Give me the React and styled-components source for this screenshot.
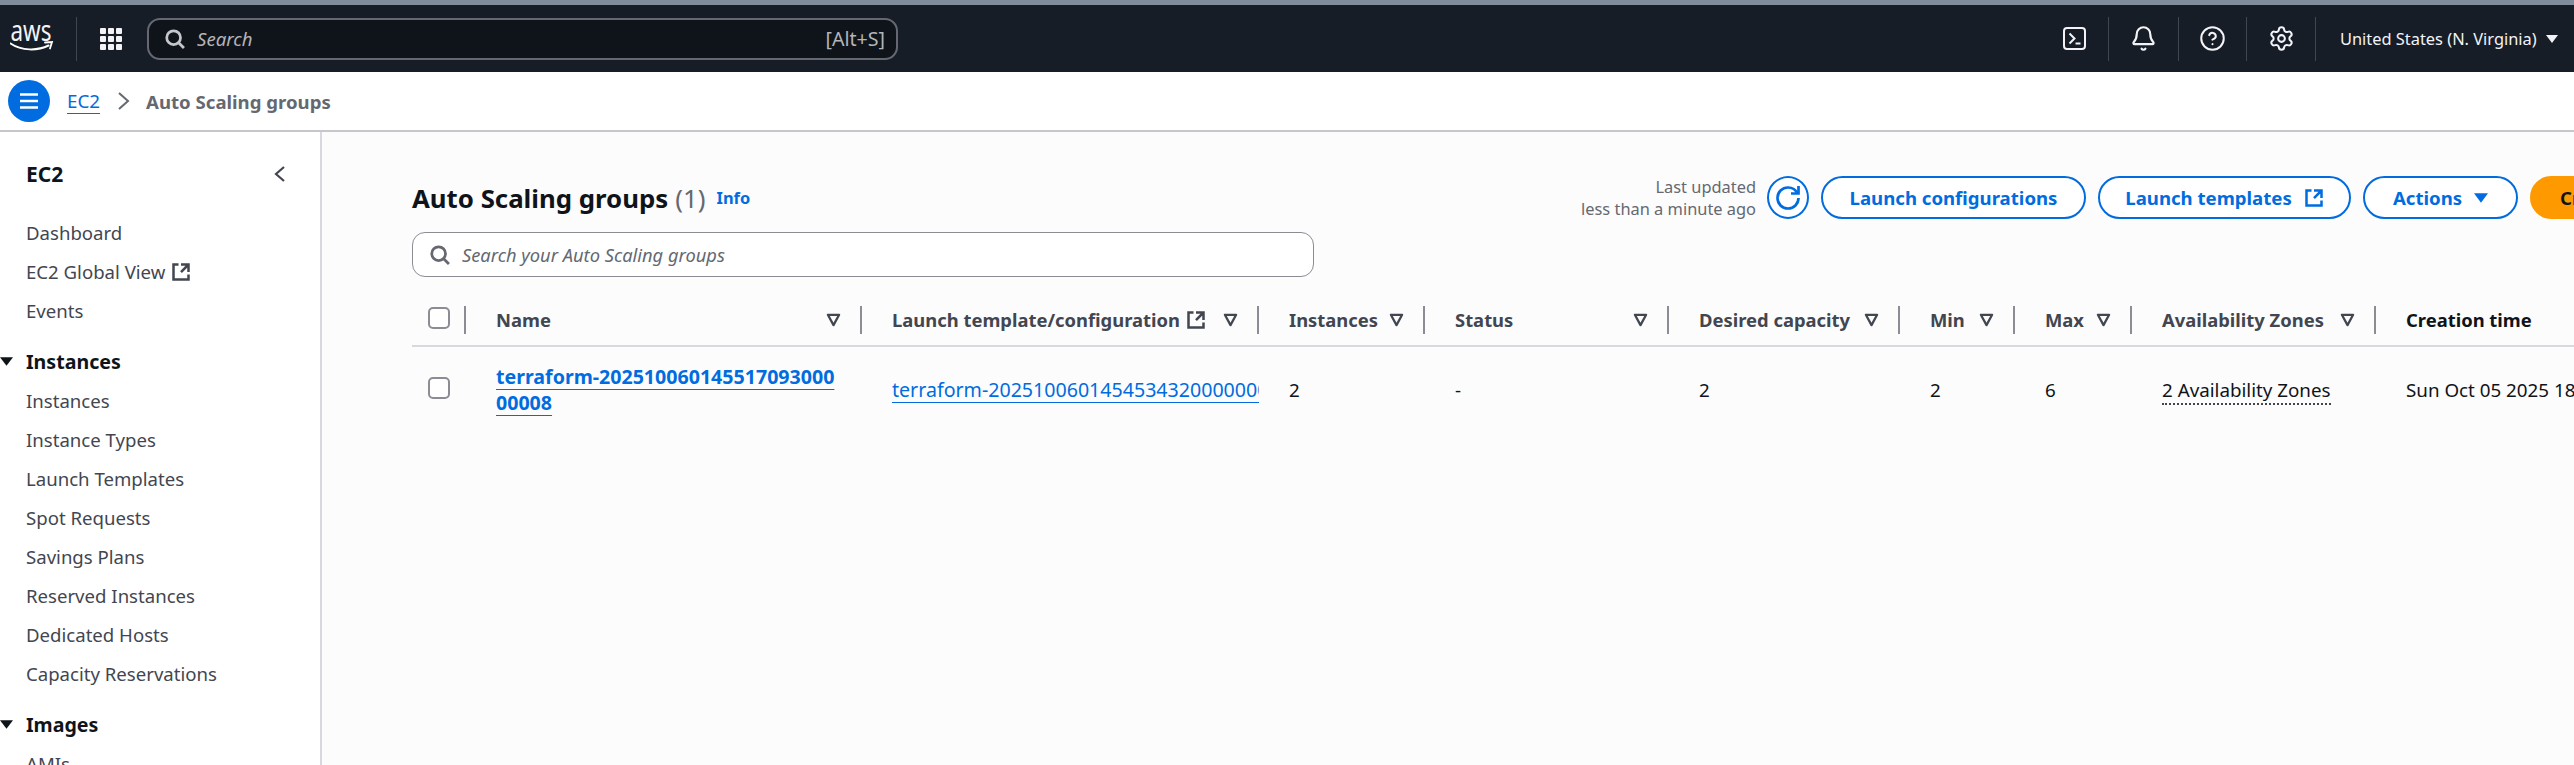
import React from 'react';
import styled, { createGlobalStyle } from 'styled-components';
import { Bell, CircleHelp, Settings } from 'lucide-react';

const GlobalStyle = createGlobalStyle`
    html,
    body {
        width: 100%;
        height: 100%;
        margin: 0;
        overflow: hidden;
    }

    body {
        background: #fff;
        color: #0f141a;
        font-family: 'Noto Sans', 'Open Sans', sans-serif;
        font-size: 18.6px;
    }
`;

const Page = styled.div`
    display: flex;
    flex-direction: column;
    height: 765px;
    overflow: hidden;
`;

const Stripe = styled.div`
    flex: none;
    height: 5px;
    background: #808c9c;
`;

const TopNav = styled.header`
    display: flex;
    flex: none;
    align-items: center;
    height: 67px;
    padding-left: 10px;
    background: #161d26;
    color: #f3f3f7;
`;

const LogoBox = styled.div`
    display: flex;
    align-items: center;
    width: 67px;
    height: 44px;
    box-sizing: border-box;
    border-right: 1px solid #424650;
`;

const GridButton = styled.div`
    display: flex;
    justify-content: center;
    box-sizing: border-box;
    width: 70px;
    padding-right: 2px;
`;

const GlobalSearch = styled.div`
    display: flex;
    align-items: center;
    box-sizing: border-box;
    width: 751px;
    height: 42px;
    padding: 0 11px 0 15px;
    color: #b4b4bb;
    background: #0f141a;
    border: 2px solid #656871;
    border-radius: 13px;
`;

const GlobalSearchText = styled.span`
    flex: 1;
    margin-left: 11px;
    font-size: 18.6px;
    font-style: italic;
`;

const Shortcut = styled.span`
    font-size: 19.6px;
`;

const NavRight = styled.div`
    display: flex;
    align-items: center;
    margin-left: auto;
`;

const NavIcon = styled.div`
    display: flex;
    align-items: center;
    justify-content: center;
    box-sizing: border-box;
    width: ${({ $w }) => $w}px;
    height: 44px;
    border-right: 1px solid #424650;
`;

const Region = styled.div`
    display: flex;
    align-items: center;
    gap: 9px;
    box-sizing: border-box;
    width: 258px;
    padding-left: 24px;
    font-size: 16.4px;
    white-space: nowrap;
`;

const Breadcrumbs = styled.div`
    display: flex;
    flex: none;
    align-items: center;
    box-sizing: border-box;
    height: 60px;
    padding-left: 8px;
    background: #fff;
    border-bottom: 2px solid #c6c6cd;
`;

const MenuButton = styled.div`
    display: flex;
    align-items: center;
    justify-content: center;
    width: 42px;
    height: 42px;
    background: #006ce0;
    border-radius: 50%;
`;

const CrumbLink = styled.a`
    margin-left: 17px;
    color: #006ce0;
    font-size: 18.8px;
    text-decoration: underline;
    text-underline-offset: 5px;
`;

const CrumbSeparator = styled.span`
    display: flex;
    margin: 0 16px 0 17px;
    color: #656871;
`;

const CrumbCurrent = styled.span`
    color: #656871;
    font-size: 18.6px;
    font-weight: 700;
`;

const Body = styled.div`
    display: flex;
    flex: 1;
    min-height: 0;
`;

const Sidebar = styled.nav`
    flex: none;
    box-sizing: border-box;
    width: 322px;
    padding-top: 24px;
    overflow: hidden;
    background: #fff;
    border-right: 2px solid #d8d8de;
`;

const SidebarTitle = styled.div`
    display: flex;
    align-items: center;
    justify-content: space-between;
    height: 36px;
    margin-bottom: 21px;
    padding: 0 34px 0 26px;
    font-size: 21px;
    font-weight: 700;
    color: #0f141a;
`;

const NavItem = styled.a`
    display: flex;
    align-items: center;
    gap: 6px;
    height: 39px;
    padding-left: 26px;
    color: #424650;
    font-size: 18.6px;
    white-space: nowrap;
`;

const NavSection = styled.div`
    display: flex;
    align-items: center;
    height: 39px;
    margin-top: 12px;
    color: #0f141a;
    font-size: 19.6px;
    font-weight: 700;
`;

const NavSectionCaret = styled.span`
    display: flex;
    width: 26px;
`;

const Main = styled.main`
    flex: 1;
    min-width: 0;
    padding: 44px 0 0 90px;
    overflow: hidden;
    background: #fcfcfc;
`;

const Content = styled.div`
    width: 2388px;
`;

const Toolbar = styled.div`
    display: flex;
    align-items: center;
    height: 43px;
`;

const Title = styled.h1`
    margin: 0;
    color: #0f141a;
    font-size: 25.8px;
    font-weight: 700;
`;

const Count = styled.span`
    margin-left: 7px;
    color: #656871;
    font-weight: 400;
`;

const InfoLink = styled.a`
    margin-left: 11px;
    color: #006ce0;
    font-size: 16.4px;
    font-weight: 700;
`;

const Actions = styled.div`
    display: flex;
    align-items: center;
    gap: 12px;
    margin-left: auto;
`;

const LastUpdated = styled.div`
    margin-right: -1px;
    color: #656871;
    font-size: 16.4px;
    line-height: 22px;
    text-align: right;
`;

const RoundButton = styled.div`
    display: flex;
    align-items: center;
    justify-content: center;
    box-sizing: border-box;
    width: 42px;
    height: 43px;
    background: #fff;
    border: 2px solid #006ce0;
    border-radius: 50%;
`;

const Button = styled.div`
    display: flex;
    align-items: center;
    justify-content: center;
    gap: 12px;
    box-sizing: border-box;
    width: ${({ $w }) => $w}px;
    height: 43px;
    color: #006ce0;
    font-size: 18.6px;
    font-weight: 700;
    white-space: nowrap;
    background: #fff;
    border: 2px solid #006ce0;
    border-radius: 22px;
`;

const PrimaryButton = styled(Button)`
    justify-content: flex-start;
    padding-left: 28px;
    color: #0f141a;
    background: #ff9900;
    border-color: #ff9900;
`;

const TableSearch = styled.div`
    display: flex;
    align-items: center;
    box-sizing: border-box;
    width: 902px;
    height: 45px;
    margin-top: 13px;
    padding-left: 16px;
    color: #656871;
    background: #fff;
    border: 1px solid #8c8c94;
    border-radius: 13px;
`;

const TableSearchText = styled.span`
    margin-left: 11px;
    font-size: 18.3px;
    font-style: italic;
`;

const Table = styled.table`
    width: 2388px;
    margin-top: 17px;
    border-collapse: collapse;
    table-layout: fixed;
`;

const HeadRow = styled.tr`
    border-bottom: 2px solid #d8d8de;
`;

const HeadCell = styled.th`
    width: ${({ $w }) => $w}px;
    height: 51px;
    padding: 0;
    font-weight: 400;
`;

const HeadInner = styled.div`
    display: flex;
    align-items: center;
    height: 28px;
    padding-left: ${({ $first }) => ($first ? 16 : 30)}px;
    color: ${({ $dark }) => ($dark ? '#0f141a' : '#424650')};
    font-size: 18.4px;
    font-weight: 700;
    white-space: nowrap;
    text-align: left;
`;

const SortSlot = styled.span`
    display: flex;
    margin: 0 ${({ $empty }) => ($empty ? 0 : 19)}px 0 auto;
`;

const LabelIcon = styled.span`
    display: flex;
    margin-left: 6px;
`;

const Divider = styled.span`
    flex: none;
    align-self: stretch;
    width: 2px;
    background: #8c8c94;
`;

const Cell = styled.td`
    height: 86px;
    padding: 0 ${({ $wrap }) => ($wrap ? 24 : 0)}px 0 ${({ $first }) => ($first ? 16 : 30)}px;
    color: #0f141a;
    font-size: 18.8px;
    white-space: ${({ $wrap }) => ($wrap ? 'normal' : 'nowrap')};
    overflow: hidden;
    line-height: 26px;
`;

const Checkbox = styled.span`
    display: block;
    flex: none;
    box-sizing: border-box;
    width: 22px;
    height: 22px;
    margin-bottom: 4px;
    background: #fff;
    border: 2px solid #8c8c94;
    border-radius: 5px;
`;

const RowLink = styled.a`
    color: #006ce0;
    font-size: 19.6px;
    font-weight: ${({ $bold }) => ($bold ? 700 : 400)};
    word-break: break-all;
    text-decoration: underline;
    text-underline-offset: 5px;
`;

const Dotted = styled.span`
    border-bottom: 2px dotted #424650;
`;

const Ext = ({ size = 20, color = 'currentColor' }) => (
    <svg width={size} height={size} viewBox="0 0 16 16" fill="none" stroke={color} strokeWidth="2">
        <path d="M14 8.01v-6H8M14.02 2 8 8.02M6 2.01H2v12h12v-3.99" />
    </svg>
);

const Search = ({ color }) => (
    <svg width="22" height="22" viewBox="0 0 16 16" fill="none" stroke={color} strokeWidth="2">
        <path d="M7 2a5 5 0 1 0 0 10A5 5 0 1 0 7 2z" />
        <path d="m10.5 10.5 4 4" />
    </svg>
);

const Sort = () => (
    <svg width="15" height="15" viewBox="0 0 16 16" fill="none" stroke="#424650" strokeWidth="2.4" strokeLinejoin="round">
        <path d="M2 3h12L8 14z" />
    </svg>
);

const Caret = ({ w = 12, h = 8, color }) => (
    <svg width={w} height={h} viewBox="0 0 12 8" fill={color}>
        <path d="M0 0h12L6 8z" />
    </svg>
);

const Logo = () => (
    <svg width="44" height="30" viewBox="0 0 44 30">
        <text x="0.5" y="17" fontFamily="'Noto Sans', sans-serif" fontSize="29" fill="#f3f3f7" textLength="41" lengthAdjust="spacingAndGlyphs">
            aws
        </text>
        <path d="M0.5 19.5c11 7.5 27 7.5 38 2" fill="none" stroke="#fff" strokeWidth="2" strokeLinecap="round" />
        <path d="M35 18.5l7-.5-2 6.5" fill="none" stroke="#fff" strokeWidth="1.8" strokeLinecap="round" />
    </svg>
);

const Grid = () => (
    <svg width="22" height="22" viewBox="0 0 22 22" fill="#f3f3f7">
        {[0, 8, 16].map((y) => [0, 8, 16].map((x) => <rect key={`${x}-${y}`} x={x} y={y} width="6" height="6" rx="1" />))}
    </svg>
);

const Terminal = () => (
    <svg width="23" height="23" viewBox="0 0 23 23" fill="none" stroke="#f3f3f7" strokeWidth="2">
        <rect x="1" y="1" width="21" height="21" rx="3" />
        <path d="M6.5 6.5l5 5-5 5M12.5 16.5h5" />
    </svg>
);

const columns = [
    { w: 54 },
    { w: 396, label: 'Name', sort: true },
    { w: 397, label: 'Launch template/configuration', ext: true, sort: true },
    { w: 166, label: 'Instances', sort: true },
    { w: 244, label: 'Status', sort: true },
    { w: 231, label: 'Desired capacity', sort: true },
    { w: 115, label: 'Min', sort: true },
    { w: 117, label: 'Max', sort: true },
    { w: 244, label: 'Availability Zones', sort: true },
    { w: 424, label: 'Creation time', dark: true },
];

const instancesNav = [
    'Instances',
    'Instance Types',
    'Launch Templates',
    'Spot Requests',
    'Savings Plans',
    'Reserved Instances',
    'Dedicated Hosts',
    'Capacity Reservations',
];

function App() {
    return (
        <Page>
            <GlobalStyle />
            <Stripe />
            <TopNav>
                <LogoBox>
                    <Logo />
                </LogoBox>
                <GridButton>
                    <Grid />
                </GridButton>
                <GlobalSearch>
                    <Search color="#c6c6cd" />
                    <GlobalSearchText>Search</GlobalSearchText>
                    <Shortcut>[Alt+S]</Shortcut>
                </GlobalSearch>
                <NavRight>
                    <NavIcon $w={69}>
                        <Terminal />
                    </NavIcon>
                    <NavIcon $w={70}>
                        <Bell size={27} strokeWidth={1.9} />
                    </NavIcon>
                    <NavIcon $w={68}>
                        <CircleHelp size={27} strokeWidth={1.8} />
                    </NavIcon>
                    <NavIcon $w={69}>
                        <Settings size={27} strokeWidth={1.8} />
                    </NavIcon>
                    <Region>
                        United States (N. Virginia)
                        <Caret color="#f3f3f7" />
                    </Region>
                </NavRight>
            </TopNav>
            <Breadcrumbs>
                <MenuButton>
                    <svg width="20" height="18" viewBox="0 0 20 18" fill="none" stroke="#fff" strokeWidth="2.5">
                        <path d="M1 2.5h18M1 9h18M1 15.5h18" />
                    </svg>
                </MenuButton>
                <CrumbLink>EC2</CrumbLink>
                <CrumbSeparator>
                    <svg width="13" height="20" viewBox="0 0 13 20" fill="none" stroke="currentColor" strokeWidth="2">
                        <path d="M2 2l9 8-9 8" />
                    </svg>
                </CrumbSeparator>
                <CrumbCurrent>Auto Scaling groups</CrumbCurrent>
            </Breadcrumbs>
            <Body>
                <Sidebar>
                    <SidebarTitle>
                        EC2
                        <svg width="12" height="18" viewBox="0 0 12 18" fill="none" stroke="#424650" strokeWidth="2.2">
                            <path d="M10 2L2 9l8 7" />
                        </svg>
                    </SidebarTitle>
                    <NavItem>Dashboard</NavItem>
                    <NavItem>
                        EC2 Global View <Ext />
                    </NavItem>
                    <NavItem>Events</NavItem>
                    <NavSection>
                        <NavSectionCaret>
                            <Caret w={13} h={9} color="#0f141a" />
                        </NavSectionCaret>
                        Instances
                    </NavSection>
                    {instancesNav.map((item) => (
                        <NavItem key={item}>{item}</NavItem>
                    ))}
                    <NavSection>
                        <NavSectionCaret>
                            <Caret w={13} h={9} color="#0f141a" />
                        </NavSectionCaret>
                        Images
                    </NavSection>
                    <NavItem>AMIs</NavItem>
                </Sidebar>
                <Main>
                    <Content>
                        <Toolbar>
                            <Title>
                                Auto Scaling groups<Count>(1)</Count>
                            </Title>
                            <InfoLink>Info</InfoLink>
                            <Actions>
                                <LastUpdated>
                                    Last updated
                                    <br />
                                    less than a minute ago
                                </LastUpdated>
                                <RoundButton>
                                    <svg width="24" height="24" viewBox="0 0 16 16" fill="none" stroke="#006ce0" strokeWidth="1.8">
                                        <path d="M10 5h5V0" />
                                        <path d="M15 8a6.957 6.957 0 0 1-7 7 6.957 6.957 0 0 1-7-7 6.957 6.957 0 0 1 7-7 6.87 6.87 0 0 1 6.3 4" />
                                    </svg>
                                </RoundButton>
                                <Button $w={265}>Launch configurations</Button>
                                <Button $w={253}>
                                    Launch templates <Ext />
                                </Button>
                                <Button $w={155}>
                                    Actions <Caret w={14} h={10} color="#006ce0" />
                                </Button>
                                <PrimaryButton $w={270}>Create Auto Scaling group</PrimaryButton>
                            </Actions>
                        </Toolbar>
                        <TableSearch>
                            <Search color="#656871" />
                            <TableSearchText>Search your Auto Scaling groups</TableSearchText>
                        </TableSearch>
                        <Table>
                            <thead>
                                <HeadRow>
                                    {columns.map((col, i) => (
                                        <HeadCell key={col.label || 'select'} $w={col.w}>
                                            <HeadInner $first={i === 0} $dark={col.dark}>
                                                {i === 0 ? <Checkbox /> : col.label}
                                                {col.ext && (
                                                    <LabelIcon>
                                                        <Ext />
                                                    </LabelIcon>
                                                )}
                                                <SortSlot $empty={!col.sort}>{col.sort && <Sort />}</SortSlot>
                                                {i < columns.length - 1 && <Divider />}
                                            </HeadInner>
                                        </HeadCell>
                                    ))}
                                </HeadRow>
                            </thead>
                            <tbody>
                                <tr>
                                    <Cell $first>
                                        <Checkbox />
                                    </Cell>
                                    <Cell $wrap>
                                        <RowLink $bold>terraform-20251006014551709300000008</RowLink>
                                    </Cell>
                                    <Cell>
                                        <RowLink>terraform-20251006014545343200000006</RowLink>
                                    </Cell>
                                    <Cell>2</Cell>
                                    <Cell>-</Cell>
                                    <Cell>2</Cell>
                                    <Cell>2</Cell>
                                    <Cell>6</Cell>
                                    <Cell>
                                        <Dotted>2 Availability Zones</Dotted>
                                    </Cell>
                                    <Cell>Sun Oct 05 2025 18:55:17 GMT-0700</Cell>
                                </tr>
                            </tbody>
                        </Table>
                    </Content>
                </Main>
            </Body>
        </Page>
    );
}

export default App;
